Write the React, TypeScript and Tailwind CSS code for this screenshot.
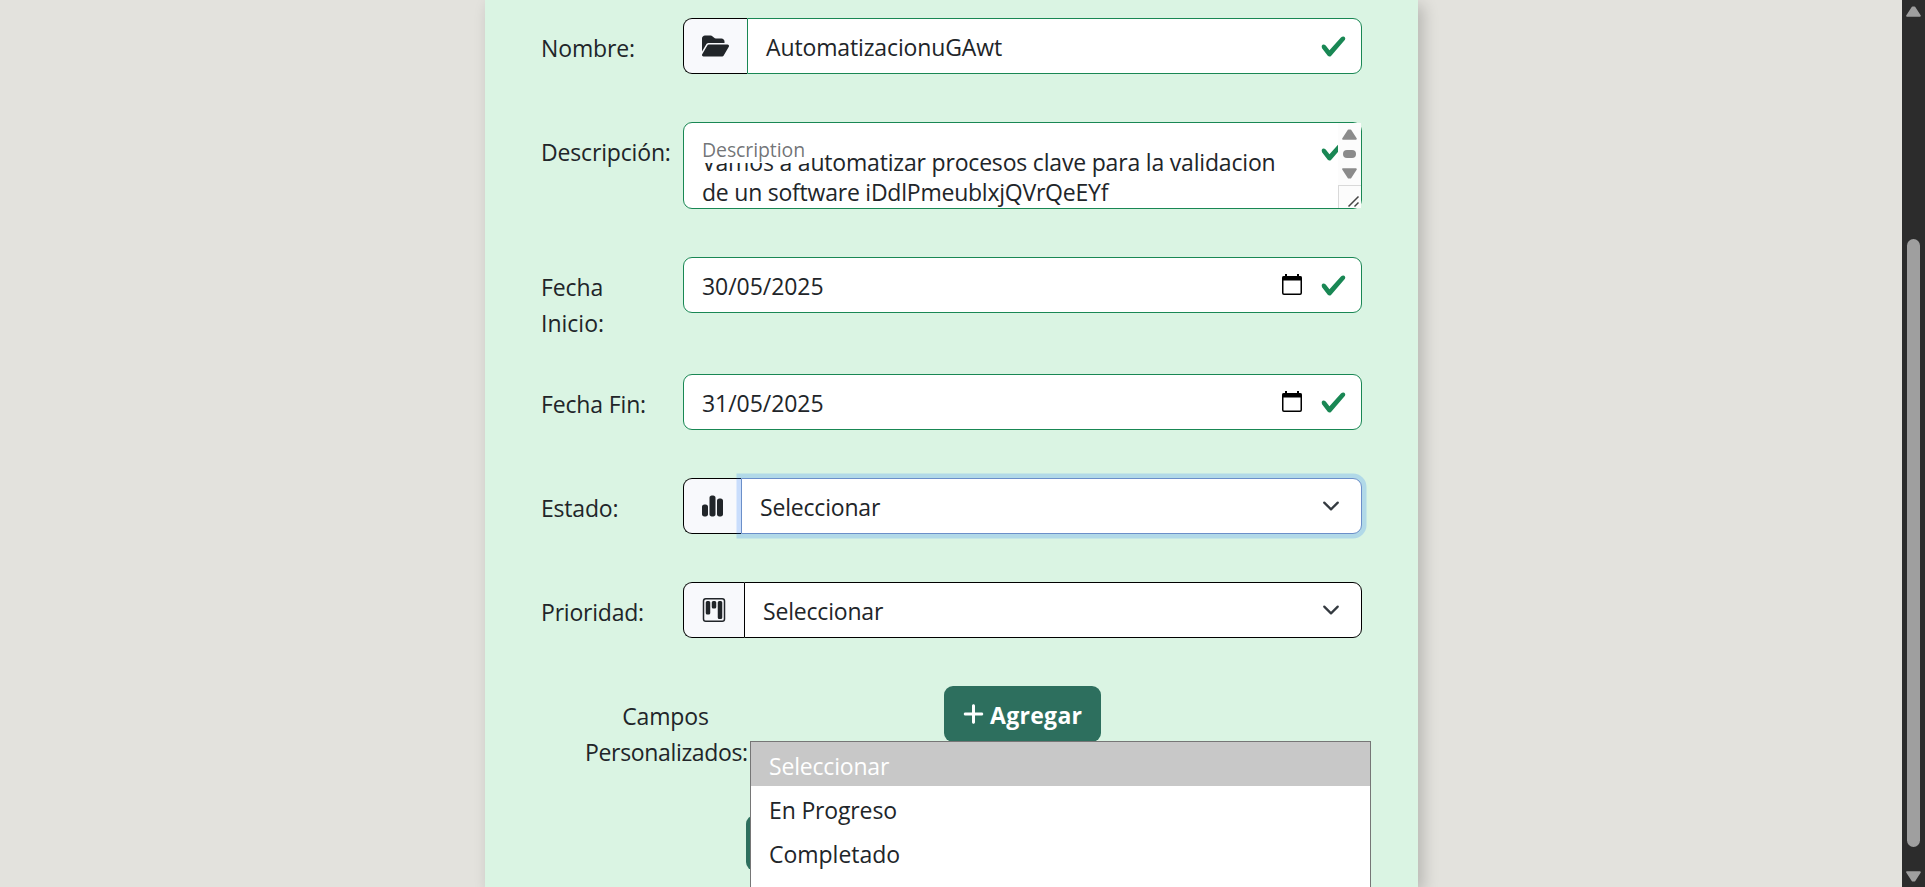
import type { ReactNode } from "react";
import { FaChartSimple, FaFolderOpen, FaPlus } from "react-icons/fa6";
import { BsKanban } from "react-icons/bs";

function Check() {
  return (
    <svg viewBox="0 0 8 8" className="size-[27px] shrink-0" fill="#198754">
      <path d="M2.3 6.73.6 4.53c-.4-1.04.46-1.4 1.1-.8l1.1 1.4 3.4-3.8c.6-.63 1.6-.27 1.2.7l-4 4.6c-.43.5-.8.4-1.1.1z" />
    </svg>
  );
}

function Chevron() {
  return (
    <svg viewBox="0 0 16 16" className="mr-[3px] size-[18px] shrink-0" fill="none" stroke="#343a40" strokeWidth="2" strokeLinecap="round" strokeLinejoin="round">
      <path d="m2 5 6 6 6-6" />
    </svg>
  );
}

function CalendarIcon() {
  return (
    <svg viewBox="0 0 20 21" className="mb-0.5 h-[21px] w-5 shrink-0">
      <rect x="0.75" y="2.75" width="18.5" height="17.5" rx="1.2" fill="none" stroke="#000" strokeWidth="1.5" />
      <path d="M0.5 2.5h19v4H0.5zM3 0h2v3H3zM15 0h2v3h-2z" fill="#000" />
    </svg>
  );
}

function Triangle({ down = false, className }: { down?: boolean; className: string }) {
  return (
    <svg viewBox="0 0 15 11" className={className} fill="currentColor" stroke="currentColor" strokeWidth="2" strokeLinejoin="round">
      <path d={down ? "M1.2 1.2h12.6L8.3 9.6h-1.6z" : "M1.2 9.8h12.6L8.3 1.4h-1.6z"} />
    </svg>
  );
}

function Row({ label, height, children }: { label: ReactNode; height: string; children: ReactNode }) {
  return (
    <div className={`flex items-start ${height}`}>
      <div className="w-[142px] shrink-0 pt-3 leading-9 whitespace-nowrap">{label}</div>
      {children}
    </div>
  );
}

function Addon({ width, children }: { width: string; children: ReactNode }) {
  return (
    <div className={`flex shrink-0 items-center rounded-l-[9px] border border-r-0 border-black bg-[#f8f9fc] pl-[18px] ${width}`}>
      {children}
    </div>
  );
}

function DateInput({ value }: { value: string }) {
  return (
    <div className="flex h-14 w-[679px] items-center rounded-[9px] border border-[#198754] bg-white pr-3.5 pl-[18px]">
      <span className="flex-1 pt-0.5 tracking-[-0.05px]">{value}</span>
      <CalendarIcon />
      <span className="ml-[18px]">
        <Check />
      </span>
    </div>
  );
}

function PageScrollbar() {
  return (
    <div className="flex w-[23px] shrink-0 flex-col items-center bg-[#2c2c2c] text-[#9f9f9f]">
      <Triangle className="mt-1.5 h-[11px] w-[15px]" />
      <div className="mt-[222px] h-[608px] w-[13px] rounded-full bg-[#9f9f9f]" />
      <Triangle down className="mt-6 h-[11px] w-[15px]" />
    </div>
  );
}

const options = [
  { label: "Seleccionar", style: "bg-[#c8c8c8] text-white tracking-[-0.19px]" },
  { label: "En Progreso", style: "tracking-[-0.15px]" },
  { label: "Completado", style: "tracking-[-0.02px]" },
];

export default function App() {
  return (
    <div className="relative flex h-[887px] w-[1925px] overflow-hidden bg-[#e3e2dd] font-['Open_Sans','Noto_Sans',sans-serif] text-[23px] leading-9 text-[#212529]">
      <div className="flex flex-1 justify-center overflow-hidden pl-px">
        <main className="w-[933px] bg-[#daf4e3] pt-[18px] pl-14 shadow-[5px_5px_15px_rgba(0,0,0,0.2)]">
          <Row height="h-[104px]" label={<span className="tracking-[-0.12px]">Nombre:</span>}>
            <div className="flex h-14 w-[679px]">
              <Addon width="w-16">
                <FaFolderOpen className="h-6 w-[27px]" />
              </Addon>
              <div className="flex flex-1 items-center rounded-r-[9px] border border-[#198754] bg-white pr-3.5 pl-[18px]">
                <span className="flex-1 pt-0.5 tracking-[-0.13px]">AutomatizacionuGAwt</span>
                <Check />
              </div>
            </div>
          </Row>

          <Row height="h-[135px]" label={<span className="tracking-[-0.16px]">Descripción:</span>}>
            <div className="relative flex h-[87px] w-[679px] rounded-[9px] border border-[#198754] bg-white">
              <p className="flex-1 pt-6 pl-[18px] leading-[30px] whitespace-nowrap">
                <span className="block tracking-[-0.185px]">Vamos a automatizar procesos clave para la validacion</span>
                <span className="block tracking-[-0.23px]">de un software iDdlPmeublxjQVrQeEYf</span>
              </p>
              <span className="absolute top-3.5 right-3.5">
                <Check />
              </span>
              <div className="absolute top-3 left-[9px] h-7 w-[116px] bg-white pl-[9px] text-[19.5px] leading-[30px] tracking-[-0.1px] text-[#212529]/65">
                Description
              </div>
              <div className="relative flex h-[85px] w-[23px] flex-col items-center bg-[#fcfcfc] text-[#8b8b8b]">
                <Triangle className="mt-1.5 h-[11px] w-[15px]" />
                <div className="mt-2.5 h-2 w-[13px] rounded-full bg-[#8b8b8b]" />
                <Triangle down className="mt-2.5 h-[11px] w-[15px]" />
                <div className="mt-auto h-[23px] w-full border-t border-l border-[#d9d9d9]">
                  <svg viewBox="0 0 22 22" className="size-[22px]" stroke="#444" strokeWidth="1.5">
                    <path d="M9.5 20.5l10-10M15.5 20.5l4-4" />
                  </svg>
                </div>
              </div>
            </div>
          </Row>

          <Row
            height="h-[117px]"
            label={
              <>
                <span className="block tracking-[-0.12px]">Fecha</span>
                <span className="block">Inicio:</span>
              </>
            }
          >
            <DateInput value="30/05/2025" />
          </Row>

          <Row height="h-[104px]" label={<span className="tracking-[-0.15px]">Fecha Fin:</span>}>
            <DateInput value="31/05/2025" />
          </Row>

          <Row height="h-[104px]" label={<span className="tracking-[-0.2px]">Estado:</span>}>
            <div className="flex h-14 w-[679px]">
              <Addon width="w-[58px]">
                <FaChartSimple className="h-6 w-[21px]" />
              </Addon>
              <div className="z-10 flex flex-1 items-center rounded-r-[9px] border border-[#6b8fc9] bg-white pr-[18px] pl-[18px] shadow-[0_0_0_4.5px_rgba(13,110,253,0.2)]">
                <span className="flex-1 pt-0.5 tracking-[-0.19px]">Seleccionar</span>
                <Chevron />
              </div>
            </div>
          </Row>

          <Row height="h-[104px]" label={<span className="tracking-[-0.21px]">Prioridad:</span>}>
            <div className="flex h-14 w-[679px]">
              <Addon width="w-[61px]">
                <BsKanban className="size-6" />
              </Addon>
              <div className="flex flex-1 items-center rounded-r-[9px] border border-black bg-white pr-[18px] pl-[18px]">
                <span className="flex-1 pt-0.5 tracking-[-0.19px]">Seleccionar</span>
                <Chevron />
              </div>
            </div>
          </Row>

          <div className="flex h-[129px] items-start pl-11">
            <div className="w-[161px] pt-3 text-center whitespace-nowrap">
              <span className="block tracking-[-0.15px]">Campos</span>
              <span className="block tracking-[-0.34px]">Personalizados:</span>
            </div>
            <button className="ml-[198px] flex h-14 w-[157px] items-center rounded-[9px] bg-[#2d6f5e] pl-[19px] font-bold text-white">
              <FaPlus className="h-6 w-[21px]" />
              <span className="ml-1.5 pt-0.5 tracking-[0.3px]">Agregar</span>
            </button>
          </div>

          <div className="ml-[205px] h-14 w-[157px] rounded-[9px] bg-[#2d6f5e]" />
        </main>
      </div>

      <PageScrollbar />

      <ul className="absolute top-[741px] left-[750px] z-20 h-[178px] w-[621px] border border-[#767676] bg-white">
        {options.map((o) => (
          <li key={o.label} className={`h-11 pt-0.5 pl-[18px] leading-[44px] ${o.style}`}>
            {o.label}
          </li>
        ))}
      </ul>
    </div>
  );
}
